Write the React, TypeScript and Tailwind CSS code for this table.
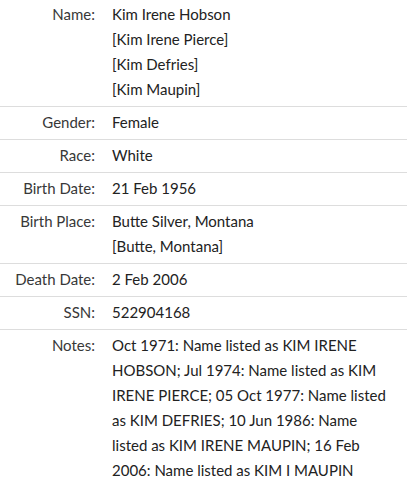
const rows: { label: string; values: string[] }[] = [
  {
    label: 'Name:',
    values: ['Kim Irene Hobson', '[Kim Irene Pierce]', '[Kim Defries]', '[Kim Maupin]'],
  },
  { label: 'Gender:', values: ['Female'] },
  { label: 'Race:', values: ['White'] },
  { label: 'Birth Date:', values: ['21 Feb 1956'] },
  { label: 'Birth Place:', values: ['Butte Silver, Montana', '[Butte, Montana]'] },
  { label: 'Death Date:', values: ['2 Feb 2006'] },
  { label: 'SSN:', values: ['522904168'] },
  {
    label: 'Notes:',
    values: [
      'Oct 1971: Name listed as KIM IRENE HOBSON; Jul 1974: Name listed as KIM IRENE PIERCE; 05 Oct 1977: Name listed as KIM DEFRIES; 10 Jun 1986: Name listed as KIM IRENE MAUPIN; 16 Feb 2006: Name listed as KIM I MAUPIN',
    ],
  },
]

export default function App() {
  return (
    <div className="w-[407px] bg-white font-['Lato',sans-serif] text-[15px] leading-[25px]">
      {rows.map((row, i) => (
        <div
          key={row.label}
          className={`flex pb-[4px] ${i === 0 ? 'pt-[2px]' : 'pt-[3px]'} ${
            i < rows.length - 1 ? 'border-b border-[#dddddd]' : ''
          }`}
        >
          <div className="w-[95px] shrink-0 text-right text-[#383838]">{row.label}</div>
          <div className="flex-1 pl-[17px] pr-[15px] text-[#222222]">
            {row.values.map((v) => (
              <div key={v}>{v}</div>
            ))}
          </div>
        </div>
      ))}
    </div>
  )
}
